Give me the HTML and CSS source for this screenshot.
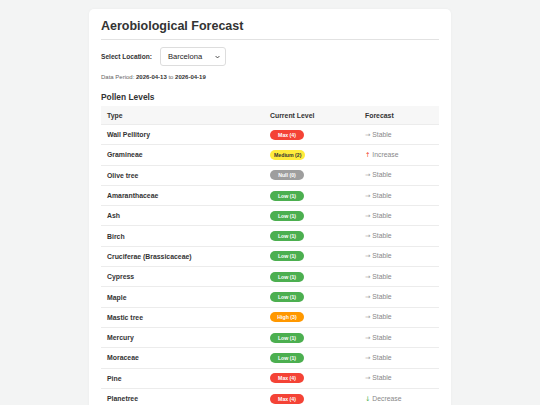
FILE: index.html
```html
<!DOCTYPE html>
<html>
<head>
<meta charset="utf-8">
<link rel="stylesheet" href="styles.css">
</head>
<body>
<div class="card">
  <h1 class="title">Aerobiological Forecast</h1>
  <div class="loc-row">
    <label class="loc-label">Select Location:</label>
    <div class="select"><span>Barcelona</span><svg class="chev" viewBox="0 0 8 5" width="5" height="4"><path d="M1 1 L4 4 L7 1" fill="none" stroke="#333" stroke-width="1.4"/></svg></div>
  </div>
  <p class="period">Data Period: <b>2026-04-13</b> to <b>2026-04-19</b></p>
  <h2 class="sub">Pollen Levels</h2>
  <table class="tbl">
    <thead>
      <tr><th class="c1">Type</th><th class="c2">Current Level</th><th class="c3">Forecast</th></tr>
    </thead>
    <tbody>
      <tr><td>Wall Pellitory</td><td><span class="badge max">Max (4)</span></td><td class="fc"><span class="ar st">→</span> Stable</td></tr>
      <tr><td>Gramineae</td><td><span class="badge med">Medium (2)</span></td><td class="fc"><span class="ar up">↑</span> Increase</td></tr>
      <tr><td>Olive tree</td><td><span class="badge nul">Null (0)</span></td><td class="fc"><span class="ar st">→</span> Stable</td></tr>
      <tr><td>Amaranthaceae</td><td><span class="badge low">Low (1)</span></td><td class="fc"><span class="ar st">→</span> Stable</td></tr>
      <tr><td>Ash</td><td><span class="badge low">Low (1)</span></td><td class="fc"><span class="ar st">→</span> Stable</td></tr>
      <tr><td>Birch</td><td><span class="badge low">Low (1)</span></td><td class="fc"><span class="ar st">→</span> Stable</td></tr>
      <tr><td>Cruciferae (Brassicaceae)</td><td><span class="badge low">Low (1)</span></td><td class="fc"><span class="ar st">→</span> Stable</td></tr>
      <tr><td>Cypress</td><td><span class="badge low">Low (1)</span></td><td class="fc"><span class="ar st">→</span> Stable</td></tr>
      <tr><td>Maple</td><td><span class="badge low">Low (1)</span></td><td class="fc"><span class="ar st">→</span> Stable</td></tr>
      <tr><td>Mastic tree</td><td><span class="badge high">High (3)</span></td><td class="fc"><span class="ar st">→</span> Stable</td></tr>
      <tr><td>Mercury</td><td><span class="badge low">Low (1)</span></td><td class="fc"><span class="ar st">→</span> Stable</td></tr>
      <tr><td>Moraceae</td><td><span class="badge low">Low (1)</span></td><td class="fc"><span class="ar st">→</span> Stable</td></tr>
      <tr><td>Pine</td><td><span class="badge max">Max (4)</span></td><td class="fc"><span class="ar st">→</span> Stable</td></tr>
      <tr><td>Planetree</td><td><span class="badge max">Max (4)</span></td><td class="fc"><span class="ar dn">↓</span> Decrease</td></tr>
    </tbody>
  </table>
</div>
</body>
</html>
```

FILE: styles.css
```css
html, body {
  margin: 0;
  padding: 0;
  background: #f3f4f4;
  font-family: "Liberation Sans", Arial, sans-serif;
  color: #333;
}
body {
  padding-top: 9px;
}
.card {
  width: 338px;
  margin: 0 auto;
  background: #fff;
  border-radius: 5px;
  padding: 10px 12px 12px;
  box-shadow: 0 0 3px rgba(0,0,0,0.04);
}
.title {
  font-size: 12.5px;
  font-weight: bold;
  margin: 0;
  padding: 0 0 5px;
  border-bottom: 1px solid #e2e2e2;
  line-height: 15px;
}
.loc-row {
  display: flex;
  align-items: center;
  margin-top: 7px;
  height: 19px;
}
.loc-label {
  font-size: 6.6px;
  font-weight: bold;
  margin-right: 8px;
}
.select {
  width: 66px;
  height: 19px;
  box-sizing: border-box;
  border: 1px solid #ddd;
  border-radius: 3px;
  display: flex;
  align-items: center;
  justify-content: space-between;
  padding: 0 5px 0 7px;
  font-size: 7.6px;
  color: #222;
}
.chev { display: block; }
.period {
  font-size: 6px;
  color: #666;
  margin: 7px 0 0;
  line-height: 9px;
}
.period b { color: #333; }
.sub {
  font-size: 8.4px;
  font-weight: bold;
  margin: 9px 0 0;
  line-height: 12px;
}
.tbl {
  width: 100%;
  border-collapse: collapse;
  margin-top: 3px;
  font-size: 6.9px;
}
.tbl th {
  background: #f7f7f7;
  text-align: left;
  font-weight: bold;
  padding: 0 6px;
  height: 18px;
  border-bottom: 1px solid #ececec;
  color: #333;
}
.tbl td {
  height: 19.3px;
  padding: 0 6px;
  border-bottom: 1px solid #ececec;
  font-weight: bold;
  color: #333;
  vertical-align: middle;
}
.c1 { width: 151px; }
.c2 { width: 83px; }
.badge {
  display: inline-block;
  font-size: 5.2px;
  font-weight: bold;
  color: #fff;
  line-height: 10px;
  padding: 0 4px;
  border-radius: 6px;
  min-width: 26px;
  text-align: center;
}
.max { background: #f44336; }
.med { background: #ffeb3b; color: #333; }
.nul { background: #9e9e9e; }
.low { background: #4caf50; }
.high { background: #ff9800; }
.tbl td.fc {
  font-weight: normal;
  color: #888;
  font-size: 6.8px;
}
.ar {
  font-family: "DejaVu Sans", sans-serif;
  font-size: 6.5px;
}
.ar.st { color: #999; }
.ar.up { color: #f44336; }
.ar.dn { color: #4caf50; }
```
